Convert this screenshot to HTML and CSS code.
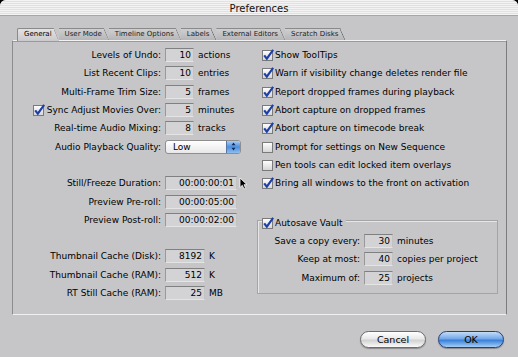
FILE: index.html
```html
<!DOCTYPE html>
<html lang="en">
  <head>
    <meta charset="utf-8" />
    <title>Preferences</title>
    <link rel="stylesheet" href="styles.css">
  </head>

  <body>
    <svg class="defs" width="0" height="0">
      <defs>
        <linearGradient id="box-fill" x1="0" y1="0" x2="0" y2="1">
          <stop offset="0" stop-color="#ffffff" />
          <stop offset="1" stop-color="#d4d4d4" />
        </linearGradient>
        <symbol id="cb-off" viewBox="0 0 12 12">
          <rect x="0.5" y="1.5" width="10" height="10" fill="url(#box-fill)" stroke="#7a7a7a" />
        </symbol>
        <symbol id="cb-on" viewBox="0 0 12 12">
          <rect x="0.5" y="1.5" width="10" height="10" fill="url(#box-fill)" stroke="#7a7a7a" />
          <path d="M2.2 6.4 L4.8 9.6 L11.2 0.8" fill="none" stroke="#1d3fa8" stroke-width="2.2" />
        </symbol>
      </defs>
    </svg>

    <div class="window">
      <div class="titlebar">Preferences</div>

      <div class="tabs">
        <span class="tab selected">General</span>
        <span class="tab">User Mode</span>
        <span class="tab">Timeline Options</span>
        <span class="tab">Labels</span>
        <span class="tab">External Editors</span>
        <span class="tab">Scratch Disks</span>
      </div>

      <div class="pane">
        <div class="col-left">
          <div class="row">
            <span class="label">Levels of Undo:</span>
            <span class="field w-num">10</span><span class="unit">actions</span>
          </div>
          <div class="row">
            <span class="label">List Recent Clips:</span>
            <span class="field w-num">10</span><span class="unit">entries</span>
          </div>
          <div class="row">
            <span class="label">Multi-Frame Trim Size:</span>
            <span class="field w-num">5</span><span class="unit">frames</span>
          </div>
          <div class="row">
            <span class="label"><svg class="cb"><use href="#cb-on" /></svg>Sync Adjust Movies Over:</span>
            <span class="field w-num">5</span><span class="unit">minutes</span>
          </div>
          <div class="row">
            <span class="label">Real-time Audio Mixing:</span>
            <span class="field w-num">8</span><span class="unit">tracks</span>
          </div>
          <div class="row">
            <span class="label">Audio Playback Quality:</span>
            <span class="popup">
              <span class="popup-value">Low</span>
              <span class="stepper">
                <svg width="5" height="9" viewBox="0 0 5 9">
                  <path d="M2.5 0.5 L4.5 3.2 L0.5 3.2 Z M2.5 8.5 L4.5 5.8 L0.5 5.8 Z" fill="#102a60" />
                </svg>
              </span>
            </span>
          </div>
          <div class="row"></div>
          <div class="row">
            <span class="label">Still/Freeze Duration:</span>
            <span class="field w-tc">00:00:00:01</span>
            <svg class="cursor" width="9" height="13" viewBox="0 0 9 13">
              <path d="M1 1 L1 10.5 L3.3 8.3 L5 12 L6.6 11.3 L5 7.7 L8 7.7 Z" fill="#000" stroke="#fff" stroke-width="0.8" />
            </svg>
          </div>
          <div class="row">
            <span class="label">Preview Pre-roll:</span>
            <span class="field w-tc">00:00:05:00</span>
          </div>
          <div class="row">
            <span class="label">Preview Post-roll:</span>
            <span class="field w-tc">00:00:02:00</span>
          </div>
          <div class="row"></div>
          <div class="row">
            <span class="label">Thumbnail Cache (Disk):</span>
            <span class="field w-cache">8192</span><span class="unit">K</span>
          </div>
          <div class="row">
            <span class="label">Thumbnail Cache (RAM):</span>
            <span class="field w-cache">512</span><span class="unit">K</span>
          </div>
          <div class="row">
            <span class="label">RT Still Cache (RAM):</span>
            <span class="field w-cache">25</span><span class="unit">MB</span>
          </div>
        </div>

        <div class="col-right">
          <div class="row check"><svg class="cb"><use href="#cb-on" /></svg>Show ToolTips</div>
          <div class="row check"><svg class="cb"><use href="#cb-on" /></svg>Warn if visibility change deletes render file</div>
          <div class="row check"><svg class="cb"><use href="#cb-on" /></svg>Report dropped frames during playback</div>
          <div class="row check"><svg class="cb"><use href="#cb-on" /></svg>Abort capture on dropped frames</div>
          <div class="row check"><svg class="cb"><use href="#cb-on" /></svg>Abort capture on timecode break</div>
          <div class="row check"><svg class="cb"><use href="#cb-off" /></svg>Prompt for settings on New Sequence</div>
          <div class="row check"><svg class="cb"><use href="#cb-off" /></svg>Pen tools can edit locked item overlays</div>
          <div class="row check"><svg class="cb"><use href="#cb-on" /></svg>Bring all windows to the front on activation</div>
          <div class="row"></div>

          <div class="group">
            <div class="legend"><svg class="cb"><use href="#cb-on" /></svg>Autosave Vault</div>
            <div class="row">
              <span class="label g-label">Save a copy every:</span>
              <span class="field w-num">30</span><span class="unit">minutes</span>
            </div>
            <div class="row">
              <span class="label g-label">Keep at most:</span>
              <span class="field w-num">40</span><span class="unit">copies per project</span>
            </div>
            <div class="row">
              <span class="label g-label">Maximum of:</span>
              <span class="field w-num">25</span><span class="unit">projects</span>
            </div>
          </div>
        </div>
      </div>

      <div class="buttons">
        <span class="button">Cancel</span>
        <span class="button default">OK</span>
      </div>
    </div>
  </body>
</html>
```

FILE: styles.css
```css
/* Page and window */

html,
body {
  margin: 0;
  background: #000;
  font-family: "DejaVu Sans", Verdana, sans-serif;
  font-size: 9px;
  color: #000;
}

.defs {
  position: absolute;
}

.window {
  width: 518px;
  height: 357px;
  overflow: hidden;
  border-radius: 6px 6px 0 0;
  background: #c6c6c9;
}

.titlebar {
  height: 15px;
  line-height: 17px;
  text-align: center;
  font-size: 10px;
  color: #111;
  background: repeating-linear-gradient(#f3f3f3 0 1px, #e1e1e1 1px 2px);
  border-bottom: 1px solid #a6a6a6;
}

/* Tabs */

.tabs {
  display: flex;
  height: 12px;
  padding: 12px 0 0 17px;
  font-size: 7px;
  line-height: 11px;
}

.tab {
  position: relative;
  height: 11px;
  padding: 0 7px 0 6px;
  color: #222;
  background: linear-gradient(#cfcfd1, #b6b6b9);
  border-top: 1px solid #8a8a8a;
  clip-path: polygon(0 0, calc(100% - 5px) 0, 100% 100%, 0 100%);
}

.tab::after {
  content: '';
  position: absolute;
  top: 0;
  right: 0;
  width: 5px;
  height: 100%;
  background: linear-gradient(to top right, transparent calc(50% - 0.7px), #6f6f6f 50%, transparent calc(50% + 0.7px));
}

.tab.selected {
  height: 12px;
  margin-bottom: -1px;
  border-left: 1px solid #8a8a8a;
  border-radius: 2px 0 0 0;
  background: linear-gradient(#e2e2e4, #cacacd);
  color: #000;
  z-index: 2;
}

/* Pane */

.pane {
  display: grid;
  grid-template-columns: 249px 1fr;
  height: 268px;
  margin: 0 11px 0 12px;
  padding-top: 5px;
  border-top: 1px solid #f2f2f2;
  border-left: 1px solid #8c8c8c;
  border-right: 1px solid #7c7c7c;
  border-bottom: 1px solid #f0f0f0;
  box-shadow: 0 1px 0 #9a9a9a inset;
}

.row {
  position: relative;
  display: flex;
  align-items: center;
  height: 18.3px;
  white-space: nowrap;
}

.label {
  display: flex;
  align-items: center;
  justify-content: flex-end;
  width: 148px;
  margin-right: 4px;
}

.unit {
  margin-left: 4px;
}

.field {
  box-sizing: border-box;
  height: 14px;
  line-height: 13px;
  padding-right: 2px;
  text-align: right;
  background: #d3d3d5;
  border: 1px solid;
  border-color: #808080 #c2c2c2 #e4e4e4 #999;
}

.w-num {
  width: 29px;
}

.w-tc {
  width: 72px;
}

.w-cache {
  width: 40px;
}

.cursor {
  position: absolute;
  left: 226px;
  top: 3px;
}

.cb {
  width: 12px;
  height: 12px;
  margin-right: 2px;
  flex: none;
}

.check .cb {
  margin-right: 1px;
}

/* Popup menu */

.popup {
  box-sizing: border-box;
  display: flex;
  align-items: center;
  width: 76px;
  height: 14px;
  border: 1px solid #8e8e8e;
  border-radius: 3px;
  background: linear-gradient(#ffffff, #e8e8e8);
  overflow: hidden;
}

.popup-value {
  flex: 1;
  padding-left: 7px;
}

.stepper {
  display: flex;
  align-items: center;
  justify-content: center;
  width: 13px;
  height: 100%;
  background: linear-gradient(#a9cdf4, #4d8fdc 50%, #8dbdf0);
  border-left: 1px solid #5676a8;
}

/* Autosave group */

.group {
  width: 239px;
  margin: 9px 0 0 -5px;
  padding-bottom: 6px;
  border: 1px solid #a4a4a4;
  box-shadow: 1px 1px 0 #e6e6e6 inset;
}

.legend {
  display: inline-flex;
  align-items: center;
  height: 18.3px;
  margin: -10px 0 0 4px;
  padding-right: 3px;
  background: #c6c6c9;
}

.legend .cb {
  margin-right: 1px;
}

.g-label {
  width: 102px;
}

/* Buttons */

.buttons {
  display: flex;
  justify-content: flex-end;
  gap: 12px;
  padding: 16px 14px 0 0;
}

.button {
  box-sizing: border-box;
  width: 66px;
  height: 17px;
  line-height: 15px;
  text-align: center;
  font-size: 9.5px;
  border-radius: 9px;
  border: 1px solid #6c6c6c;
  background: linear-gradient(#ffffff, #e9e9e9 45%, #d2d2d2 55%, #fafafa);
  box-shadow: 0 1px 1px rgba(0, 0, 0, 0.3);
}

.button.default {
  border-color: #263f78;
  background: linear-gradient(#c4ddf8, #72a8ea 45%, #3a80d8 55%, #a3cff6);
}
```
